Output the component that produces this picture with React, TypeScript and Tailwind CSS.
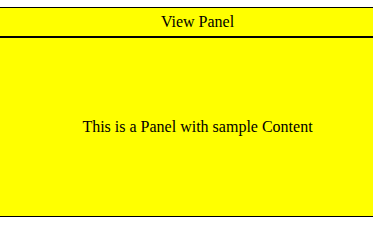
export default function App() {
  return (
    <div className="w-full overflow-hidden bg-white pt-[7px] font-['Liberation_Serif',serif] text-black">
      <div className="w-[395px] border-y border-black bg-[#ffff00]">
        {/* Header */}
        <div className="flex h-[30px] items-center justify-center border-b-2 border-black text-base">
          View Panel
        </div>
        {/* Body */}
        <div className="flex h-[178px] items-center justify-center text-base">
          This is a Panel with sample Content
        </div>
      </div>
    </div>
  );
}
